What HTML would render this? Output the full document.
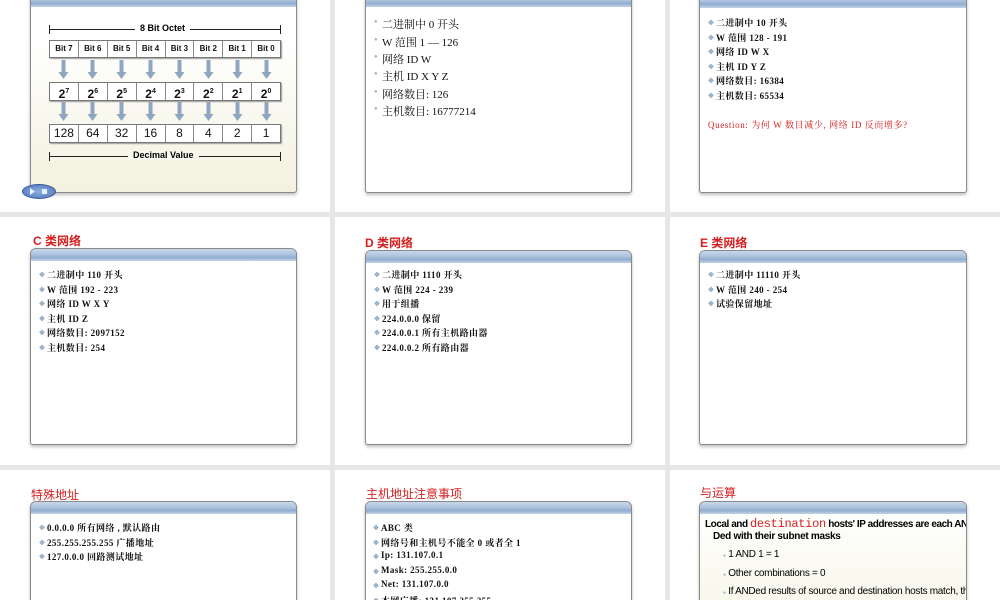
<!DOCTYPE html>
<html style="width:1000px;height:600px;overflow:hidden"><head><meta charset="utf-8"><style>
*{margin:0;padding:0;box-sizing:border-box}
body{width:1000px;height:600px;background:#e6e6e6;position:relative;overflow:hidden;font-family:"Liberation Serif","Noto Serif CJK SC",serif}
.s{position:absolute;background:#fff;overflow:hidden}
.f{position:absolute;border:1px solid #8a8a8a;border-radius:6px 6px 3px 3px;background:#fff;box-shadow:0 2px 3px rgba(0,0,0,.25);overflow:hidden}
.f .h{position:absolute;left:0;right:0;top:0;height:12px;background:linear-gradient(#c9d8ea,#a9c0dc 50%,#8fabcf 70%,#c4d4e8)}
.t{position:absolute;white-space:nowrap;font-weight:bold;color:#111;font-size:9px;letter-spacing:.4px}
.t::before{content:"◆";color:#9fb3c9;font-size:6px;position:absolute;left:-8px;top:2px}
.b{position:absolute;white-space:nowrap;color:#111;font-size:11px}
.b::before{content:"●";color:#9fb3c9;font-size:6px;position:absolute;left:-8px;top:3px}
.ti{position:absolute;color:#d42020;font-size:12px;font-weight:bold;font-family:"Liberation Sans","Noto Sans CJK SC",sans-serif;white-space:nowrap}
.sans{font-family:"Liberation Sans","Noto Sans CJK SC",sans-serif}
.row{position:absolute;left:49px;width:232px;display:flex;border:1px solid #777;background:#fff;box-shadow:1px 1px 1px #999}
.row div{flex:1;border-right:1px solid #888;text-align:center;font-family:"Liberation Sans",sans-serif;font-weight:bold;color:#111}
.row div:last-child{border-right:none}
</style></head><body>
<!-- row1 -->
<div class="s" style="left:0;top:0;width:330px;height:212px">
 <div class="f" style="left:30px;top:-6px;width:267px;height:199px;background:linear-gradient(#fff 20%,#f3f1df);border-radius:3px">
  <div class="h" style="height:12px"></div>
 </div>
 <div style="position:absolute;left:49px;top:29px;width:232px;height:1px;background:#222"></div>
 <div style="position:absolute;left:49px;top:25px;width:1px;height:9px;background:#222"></div>
 <div style="position:absolute;left:280px;top:25px;width:1px;height:9px;background:#222"></div>
 <div class="sans" style="position:absolute;left:135px;top:23px;background:#fefefc;padding:0 5px;font-size:9px;font-weight:bold">8 Bit Octet</div>
 <div class="row" style="top:40px;height:18px"><div style="font-size:8px;line-height:16px">Bit 7</div><div style="font-size:8px;line-height:16px">Bit 6</div><div style="font-size:8px;line-height:16px">Bit 5</div><div style="font-size:8px;line-height:16px">Bit 4</div><div style="font-size:8px;line-height:16px">Bit 3</div><div style="font-size:8px;line-height:16px">Bit 2</div><div style="font-size:8px;line-height:16px">Bit 1</div><div style="font-size:8px;line-height:16px">Bit 0</div></div>
 <div class="row" style="top:82px;height:19px"><div style="font-size:12px;line-height:17px">2<sup style="font-size:7px">7</sup></div><div style="font-size:12px;line-height:17px">2<sup style="font-size:7px">6</sup></div><div style="font-size:12px;line-height:17px">2<sup style="font-size:7px">5</sup></div><div style="font-size:12px;line-height:17px">2<sup style="font-size:7px">4</sup></div><div style="font-size:12px;line-height:17px">2<sup style="font-size:7px">3</sup></div><div style="font-size:12px;line-height:17px">2<sup style="font-size:7px">2</sup></div><div style="font-size:12px;line-height:17px">2<sup style="font-size:7px">1</sup></div><div style="font-size:12px;line-height:17px">2<sup style="font-size:7px">0</sup></div></div>
 <div class="row" style="top:124px;height:19px"><div style="font-size:12px;line-height:17px;font-weight:normal">128</div><div style="font-size:12px;line-height:17px;font-weight:normal">64</div><div style="font-size:12px;line-height:17px;font-weight:normal">32</div><div style="font-size:12px;line-height:17px;font-weight:normal">16</div><div style="font-size:12px;line-height:17px;font-weight:normal">8</div><div style="font-size:12px;line-height:17px;font-weight:normal">4</div><div style="font-size:12px;line-height:17px;font-weight:normal">2</div><div style="font-size:12px;line-height:17px;font-weight:normal">1</div></div>
 <svg style="position:absolute;left:49px;top:60px" width="232" height="62">
  <defs><g id="a"><rect x="-2" y="0" width="4" height="13" fill="#8fa6c0"/><polygon points="-5,12 5,12 0,19" fill="#8fa6c0"/></g></defs>
  <use href="#a" x="14.5" y="0"/><use href="#a" x="43.5" y="0"/><use href="#a" x="72.5" y="0"/><use href="#a" x="101.5" y="0"/><use href="#a" x="130.5" y="0"/><use href="#a" x="159.5" y="0"/><use href="#a" x="188.5" y="0"/><use href="#a" x="217.5" y="0"/>
  <use href="#a" x="14.5" y="42"/><use href="#a" x="43.5" y="42"/><use href="#a" x="72.5" y="42"/><use href="#a" x="101.5" y="42"/><use href="#a" x="130.5" y="42"/><use href="#a" x="159.5" y="42"/><use href="#a" x="188.5" y="42"/><use href="#a" x="217.5" y="42"/>
 </svg>
 <div style="position:absolute;left:49px;top:156px;width:232px;height:1px;background:#222"></div>
 <div style="position:absolute;left:49px;top:152px;width:1px;height:9px;background:#222"></div>
 <div style="position:absolute;left:280px;top:152px;width:1px;height:9px;background:#222"></div>
 <div class="sans" style="position:absolute;left:128px;top:150px;background:#f8f7ec;padding:0 5px;font-size:9px;font-weight:bold">Decimal Value</div>
 <div style="position:absolute;left:22px;top:184px;width:34px;height:15px;border-radius:50%;background:radial-gradient(#8fb0e0,#4a72b8);border:1px solid #3a5a98"></div>
 <svg style="position:absolute;left:28px;top:187px" width="22" height="9"><polygon points="2,1 7,4.5 2,8" fill="#e8f0fb"/><rect x="14" y="2" width="5" height="5" fill="#e8f0fb"/></svg>
</div>
<div class="s" style="left:335px;top:0;width:330px;height:212px">
 <div class="f" style="left:30px;top:-6px;width:267px;height:199px;border-radius:3px"><div class="h"></div></div>
 <div class="b" style="left:47px;top:16px">二进制中 0 开头</div>
 <div class="b" style="left:47px;top:34px">W 范围 1 — 126</div>
 <div class="b" style="left:47px;top:51px">网络 ID W</div>
 <div class="b" style="left:47px;top:68px">主机 ID X Y Z</div>
 <div class="b" style="left:47px;top:86px">网络数目: 126</div>
 <div class="b" style="left:47px;top:103px">主机数目: 16777214</div>
</div>
<div class="s" style="left:670px;top:0;width:330px;height:212px">
 <div class="f" style="left:29px;top:-6px;width:268px;height:199px;border-radius:3px"><div class="h" style="height:13px"></div></div>
 <div class="t" style="left:46px;top:16px">二进制中 10 开头</div>
 <div class="t" style="left:46px;top:31px">W 范围 128 - 191</div>
 <div class="t" style="left:46px;top:45px">网络 ID W X</div>
 <div class="t" style="left:46px;top:60px">主机 ID Y Z</div>
 <div class="t" style="left:46px;top:74px">网络数目: 16384</div>
 <div class="t" style="left:46px;top:89px">主机数目: 65534</div>
 <div style="position:absolute;left:38px;top:118px;color:#d42020;font-size:9px;white-space:nowrap;letter-spacing:.6px">Question: 为何 W 数目减少, 网络 ID 反而增多?</div>
</div>
<!-- row2 -->
<div class="s" style="left:0;top:217px;width:330px;height:248px">
 <div class="ti" style="left:33px;top:15px">C 类网络</div>
 <div class="f" style="left:30px;top:31px;width:267px;height:197px"><div class="h"></div></div>
 <div class="t" style="left:47px;top:51px">二进制中 110 开头</div>
 <div class="t" style="left:47px;top:66px">W 范围 192 - 223</div>
 <div class="t" style="left:47px;top:80px">网络 ID W X Y</div>
 <div class="t" style="left:47px;top:95px">主机 ID Z</div>
 <div class="t" style="left:47px;top:109px">网络数目: 2097152</div>
 <div class="t" style="left:47px;top:124px">主机数目: 254</div>
</div>
<div class="s" style="left:335px;top:217px;width:330px;height:248px">
 <div class="ti" style="left:30px;top:17px">D 类网络</div>
 <div class="f" style="left:30px;top:33px;width:267px;height:195px"><div class="h"></div></div>
 <div class="t" style="left:47px;top:51px">二进制中 1110 开头</div>
 <div class="t" style="left:47px;top:66px">W 范围 224 - 239</div>
 <div class="t" style="left:47px;top:80px">用于组播</div>
 <div class="t" style="left:47px;top:95px">224.0.0.0  保留</div>
 <div class="t" style="left:47px;top:109px">224.0.0.1  所有主机路由器</div>
 <div class="t" style="left:47px;top:124px">224.0.0.2  所有路由器</div>
</div>
<div class="s" style="left:670px;top:217px;width:330px;height:248px">
 <div class="ti" style="left:30px;top:17px">E 类网络</div>
 <div class="f" style="left:29px;top:33px;width:268px;height:195px"><div class="h"></div></div>
 <div class="t" style="left:46px;top:51px">二进制中 11110 开头</div>
 <div class="t" style="left:46px;top:66px">W 范围 240 - 254</div>
 <div class="t" style="left:46px;top:80px">试验保留地址</div>
</div>
<!-- row3 -->
<div class="s" style="left:0;top:470px;width:330px;height:130px">
 <div class="ti" style="left:31px;top:16px;font-weight:normal">特殊地址</div>
 <div class="f" style="left:30px;top:31px;width:267px;height:120px"><div class="h"></div></div>
 <div class="t" style="left:47px;top:51px">0.0.0.0  所有网络 , 默认路由</div>
 <div class="t" style="left:47px;top:66px">255.255.255.255  广播地址</div>
 <div class="t" style="left:47px;top:80px">127.0.0.0 回路测试地址</div>
</div>
<div class="s" style="left:335px;top:470px;width:330px;height:130px">
 <div class="ti" style="left:31px;top:15px;font-weight:normal">主机地址注意事项</div>
 <div class="f" style="left:30px;top:31px;width:267px;height:120px"><div class="h"></div></div>
 <div class="t" style="left:46px;top:51px">ABC 类</div>
 <div class="t" style="left:46px;top:66px">网络号和主机号不能全 0 或者全 1</div>
 <div class="t" style="left:46px;top:80px">Ip:   131.107.0.1</div>
 <div class="t" style="left:46px;top:95px">Mask:  255.255.0.0</div>
 <div class="t" style="left:46px;top:109px">Net:  131.107.0.0</div>
 <div class="t" style="left:46px;top:124px">本网广播: 131.107.255.255</div>
</div>
<div class="s" style="left:670px;top:470px;width:330px;height:130px">
 <div class="ti" style="left:30px;top:14px;font-weight:normal">与运算</div>
 <div class="f" style="left:29px;top:31px;width:268px;height:120px;background:linear-gradient(#fff,#f7f6e8)"><div class="h"></div></div>
 <div style="position:absolute;left:30px;top:40px;width:266px;height:90px;overflow:hidden">
 <div class="sans" style="position:absolute;left:5px;top:7px;font-size:10px;font-weight:bold;white-space:nowrap;letter-spacing:-.45px">Local and <span style="color:#d42020;font-family:'Liberation Mono',monospace;font-weight:normal;font-size:12px;letter-spacing:-.3px">destination</span> hosts' IP addresses are each AN</div>
 <div class="sans" style="position:absolute;left:13px;top:21px;font-size:10px;font-weight:bold;white-space:nowrap;letter-spacing:-.3px">Ded with their subnet masks</div>
 <div class="sans" style="position:absolute;left:23px;top:39px;font-size:10px;white-space:nowrap;letter-spacing:-.3px"><span style="color:#9fb3c9;font-size:5px">●</span> 1 AND 1 = 1</div>
 <div class="sans" style="position:absolute;left:23px;top:58px;font-size:10px;white-space:nowrap;letter-spacing:-.3px"><span style="color:#9fb3c9;font-size:5px">●</span> Other combinations = 0</div>
 <div class="sans" style="position:absolute;left:23px;top:76px;font-size:10px;white-space:nowrap;letter-spacing:-.3px"><span style="color:#9fb3c9;font-size:5px">●</span> If ANDed results of source and destination hosts match, th</div>
 </div>
</div>
</body></html>
